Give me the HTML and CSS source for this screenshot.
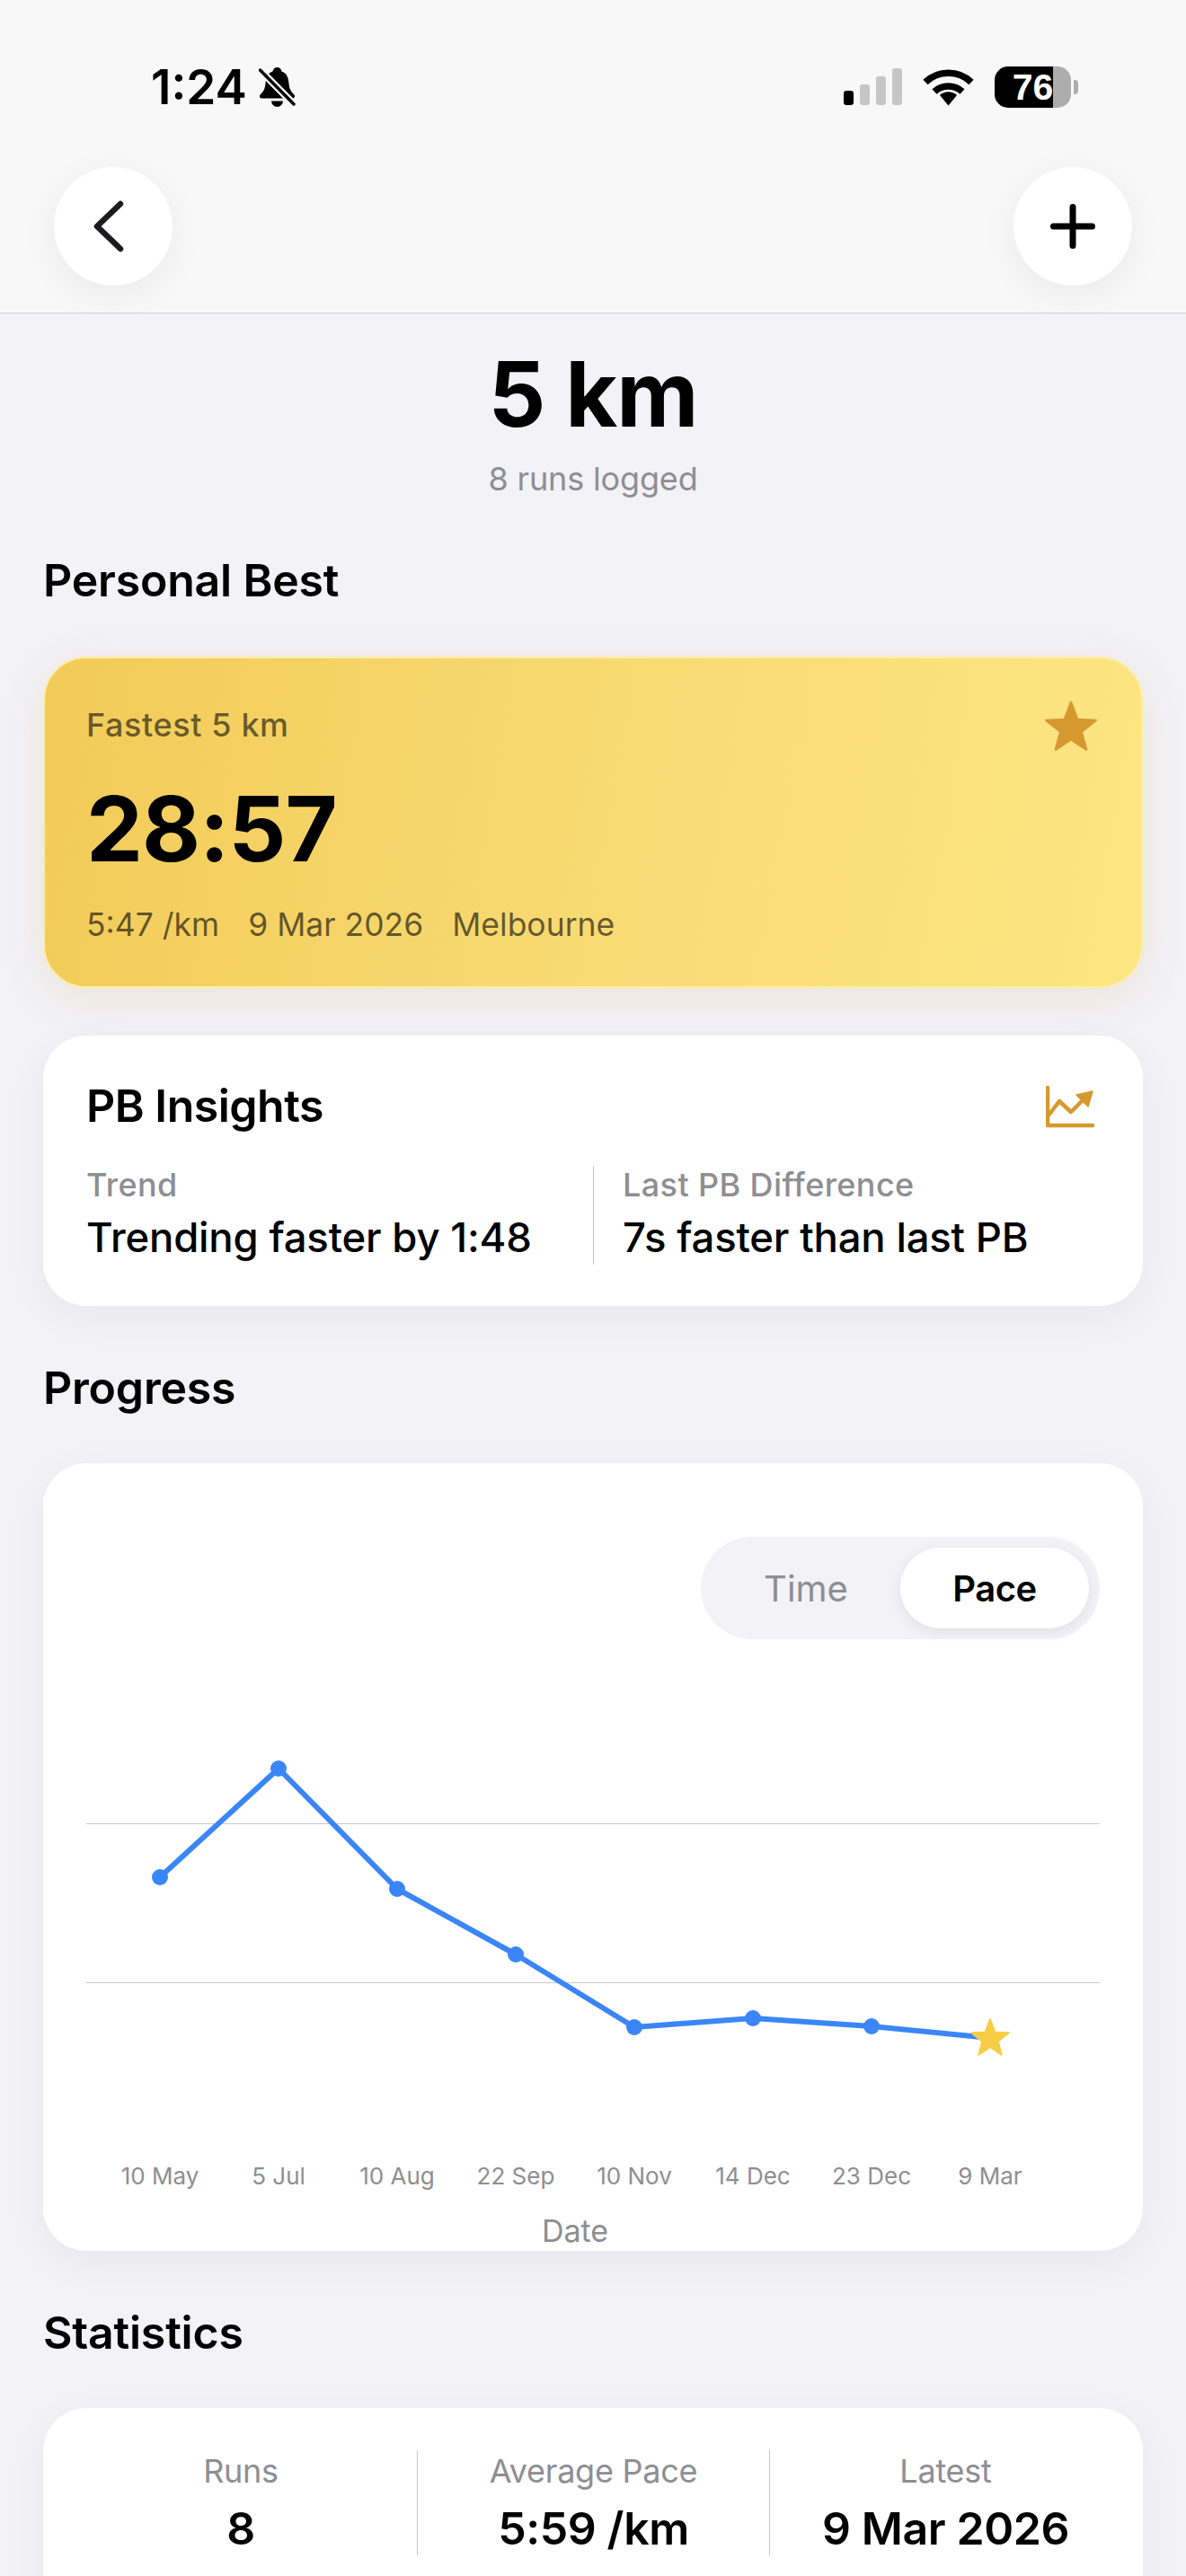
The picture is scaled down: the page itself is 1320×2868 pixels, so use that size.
FILE: index.html
```html
<!DOCTYPE html>
<html lang="en">
<head>
<meta charset="utf-8">
<title>5 km</title>
<link rel="stylesheet" href="styles.css">
</head>
<body>
<svg class="defs" width="0" height="0" aria-hidden="true">
  <symbol id="star" viewBox="-1.1 -1.1 2.2 2.2">
    <polygon points="0,-1 .247,-.34 .951,-.309 .4,.13 .588,.809 0,.42 -.588,.809 -.4,.13 -.951,-.309 -.247,-.34" fill="currentColor" stroke="currentColor" stroke-width=".09" stroke-linejoin="round"/>
  </symbol>
</svg>
<header class="topbar">
  <div class="status">
    <div class="status-left">
      <span class="clock">1:24</span>
      <svg class="bell" viewBox="0 0 41 46" width="41" height="46">
        <path d="M20.5 0c-2.6 0-4.6 2-5 4.6C9.500 6.600 8 12 7.500 18 7 24 5 27 2 30c-2 2-1 4.500 1.500 4.500h34c2.500 0 3.500-2.500 1.500-4.500-3-3-5-6-5.500-12C33 12 31.500 6.600 25.500 4.600 25.100 2 23.100 0 20.500 0z" fill="#000"/>
        <path d="M14 37.500h13a6.500 6.500 0 0 1-13 0z" fill="#000"/>
        <path d="M1 2.500 40 42" stroke="#f8f8f8" stroke-width="8"/>
        <path d="M1.500 3 39 41" stroke="#000" stroke-width="3.500" stroke-linecap="round"/>
      </svg>
    </div>
    <div class="status-right">
      <div class="signal">
        <i class="bar bar-1 bar-on"></i><i class="bar bar-2"></i><i class="bar bar-3"></i><i class="bar bar-4"></i>
      </div>
      <svg class="wifi" viewBox="0 0 57 43" width="57" height="43">
        <path d="M3 16.500a37 37 0 0 1 51 0" fill="none" stroke="#000" stroke-width="7.500"/>
        <path d="M13 27a23 23 0 0 1 31 0" fill="none" stroke="#000" stroke-width="7.500"/>
        <path d="M28.500 42.500 19 31a14 14 0 0 1 19 0z" fill="#000"/>
      </svg>
      <div class="battery"><span class="battery-level">76</span><i class="battery-nub"></i></div>
    </div>
  </div>
  <div class="nav">
    <button class="round-btn" aria-label="Back">
      <svg class="chevron" viewBox="0 0 40 60" width="40" height="60"><path d="M33 5 7 30l26 25" fill="none" stroke="#1c1c1e" stroke-width="6.500" stroke-linecap="round" stroke-linejoin="round"/></svg>
    </button>
    <button class="round-btn" aria-label="Add">
      <svg viewBox="0 0 56 56" width="56" height="56"><path d="M28 6.500v43M6.500 28h43" fill="none" stroke="#000" stroke-width="7" stroke-linecap="round"/></svg>
    </button>
  </div>
</header>

<main class="content">
  <div class="hero">
    <h1 class="hero-title">5 km</h1>
    <p class="hero-sub">8 runs logged</p>
  </div>

  <h2 class="section-title title-best">Personal Best</h2>
  <section class="pb-card">
    <div class="pb-head">
      <span class="pb-label">Fastest 5 km</span>
      <svg class="pb-star" width="64" height="64"><use href="#star"/></svg>
    </div>
    <div class="pb-time">28:57</div>
    <div class="pb-meta"><span>5:47 /km</span><span>9 Mar 2026</span><span>Melbourne</span></div>
  </section>

  <section class="card insights">
    <div class="insights-head">
      <h3 class="insights-title">PB Insights</h3>
      <svg class="trend-icon" viewBox="0 0 60 60" width="60" height="60">
        <path d="M2 10v42h50" fill="none" stroke="currentColor" stroke-width="4.500" stroke-linecap="round" stroke-linejoin="round"/>
        <path d="M2 42 15 25l13 12 14-14" fill="none" stroke="currentColor" stroke-width="4.500" stroke-linecap="round" stroke-linejoin="round"/>
        <path d="M34 18 52 14l-5 17z" fill="currentColor" stroke="currentColor" stroke-width="1.500" stroke-linejoin="round"/>
      </svg>
    </div>
    <div class="insights-grid">
      <div class="insight">
        <div class="insight-label">Trend</div>
        <div class="insight-value">Trending faster by 1:48</div>
      </div>
      <div class="insight insight-right">
        <div class="insight-label">Last PB Difference</div>
        <div class="insight-value">7s faster than last PB</div>
      </div>
    </div>
  </section>

  <h2 class="section-title title-progress">Progress</h2>
  <section class="card progress">
    <div class="toggle-row">
      <div class="toggle">
        <span class="seg">Time</span>
        <span class="seg seg-on">Pace</span>
      </div>
    </div>
    <svg class="chart" viewBox="96 1825 1128 575" width="1128" height="575">
      <line class="grid" x1="96" y1="2030.5" x2="1224" y2="2030.5"/>
      <line class="grid" x1="96" y1="2207.5" x2="1224" y2="2207.5"/>
      <polyline class="trend" points="178,2090 310,1969 442,2103 574,2176 706,2257 838,2247 970,2256 1102,2269"/>
      <g class="dots">
        <circle cx="178" cy="2090" r="9"/><circle cx="310" cy="1969" r="9"/><circle cx="442" cy="2103" r="9"/><circle cx="574" cy="2176" r="9"/>
        <circle cx="706" cy="2257" r="9"/><circle cx="838" cy="2247" r="9"/><circle cx="970" cy="2256" r="9"/>
      </g>
      <use class="chart-star" href="#star" x="1078" y="2246" width="48" height="48"/>
    </svg>
    <div class="axis">
      <span>10 May</span><span>5 Jul</span><span>10 Aug</span><span>22 Sep</span><span>10 Nov</span><span>14 Dec</span><span>23 Dec</span><span>9 Mar</span>
    </div>
    <div class="axis-title">Date</div>
  </section>

  <h2 class="section-title title-stats">Statistics</h2>
  <section class="card stats">
    <div class="stat"><div class="stat-label">Runs</div><div class="stat-value">8</div></div>
    <div class="stat"><div class="stat-label">Average Pace</div><div class="stat-value">5:59 /km</div></div>
    <div class="stat"><div class="stat-label">Latest</div><div class="stat-value">9 Mar 2026</div></div>
  </section>
</main>
</body>
</html>
```

FILE: styles.css
```css
* { box-sizing: border-box; }
html, body { margin: 0; padding: 0; height: 2868px; overflow: hidden; }
body {
  background: #f2f2f7;
  font-family: Inter, "Liberation Sans", sans-serif;
  color: #000;
}
.defs { position: absolute; }

/* top bar */
.topbar {
  height: 349px;
  background: #f8f8f8;
  border-bottom: 1px solid #cfcfcf;
  padding-top: 74px;
}
.status {
  display: flex;
  justify-content: space-between;
  height: 46px;
  padding: 0 128px 0 168px;
}
.status-left { display: flex; align-items: center; gap: 13px; }
.clock { font-size: 53px; font-weight: 600; line-height: 46px; }
.bell { display: block; margin-top: 2px; }
.status-right { display: flex; align-items: flex-start; }
.signal { display: flex; align-items: flex-end; gap: 7px; height: 43px; margin-right: 23px; width: 65px; }
.bar { display: block; width: 11px; border-radius: 3px; background: #c6c6c6; }
.bar-1 { height: 16px; }
.bar-2 { height: 23px; }
.bar-3 { height: 32px; }
.bar-4 { height: 41px; }
.bar-on { background: #000; }
.wifi { display: block; margin-top: 1px; margin-right: 23px; }
.battery {
  position: relative;
  width: 85px;
  height: 46px;
  border-radius: 15px;
  background: linear-gradient(90deg, #000 0 65px, #adadad 65px);
  text-align: center;
  color: #fff;
}
.battery-level {
  font-family: "Liberation Sans", sans-serif;
  font-size: 41px;
  font-weight: 700;
  line-height: 46px;
  display: block;
}
.battery-nub {
  position: absolute;
  left: 88px;
  top: 15px;
  width: 5px;
  height: 16px;
  border-radius: 0 4px 4px 0;
  background: #adadad;
}
.nav {
  display: flex;
  justify-content: space-between;
  padding: 66px 60px 0;
}
.round-btn {
  width: 132px;
  height: 132px;
  border: 0;
  padding: 0;
  border-radius: 50%;
  background: #fff;
  display: flex;
  align-items: center;
  justify-content: center;
  box-shadow: 0 10px 40px rgba(0, 0, 0, .06);
}
.chevron { margin-right: 10px; }

/* main */
.content { padding: 0 48px; }
.hero { text-align: center; padding-top: 30px; }
.hero-title { margin: 0; font-size: 100px; font-weight: 700; line-height: 120px; letter-spacing: -1px; }
.hero-sub { margin: 9px 0 0; font-size: 36px; line-height: 50px; letter-spacing: -.15px; color: #8e8e93; }
.section-title { margin: 0; font-size: 50px; font-weight: 600; line-height: 60px; letter-spacing: -.2px; }
.title-best { margin-top: 58px; margin-bottom: 55px; }
.title-progress { margin-top: 61px; margin-bottom: 54px; }
.title-stats { margin-top: 61px; margin-bottom: 54px; }

.pb-card {
  border: 2px solid #fdeea6;
  border-radius: 48px;
  padding: 46px 46px 43px;
  height: 369px;
  background: linear-gradient(100deg, #f2cb58 0%, #f8da72 50%, #fce683 100%);
  box-shadow: 0 12px 48px rgba(214, 153, 47, .16);
}
.pb-head { display: flex; justify-content: space-between; align-items: flex-start; height: 64px; }
.pb-label { font-size: 36px; font-weight: 500; line-height: 56px; letter-spacing: .6px; color: rgba(0, 0, 0, .58); }
.pb-star { color: #d6992f; display: block; }
.pb-time { margin-top: 20px; font-size: 100px; font-weight: 700; line-height: 120px; letter-spacing: -1px; }
.pb-meta {
  display: flex;
  gap: 32px;
  margin-top: 22px;
  font-size: 35.5px;
  line-height: 50px;
  color: rgba(0, 0, 0, .6);
}

.card {
  background: #fff;
  border-radius: 48px;
  box-shadow: 0 12px 48px rgba(0, 0, 0, .05);
}
.insights { margin-top: 53px; padding: 48px 48px 44px; height: 301px; }
.insights-head { display: flex; justify-content: space-between; height: 60px; }
.insights-title { margin: 0; font-size: 50px; font-weight: 600; line-height: 60px; letter-spacing: -.5px; }
.trend-icon { color: #d6992f; display: block; }
.insights-grid { display: grid; grid-template-columns: 564px 1fr; margin-top: 37px; height: 109px; }
.insight-right { border-left: 1px solid #c8c8c8; padding-left: 32px; }
.insight-label { font-size: 36px; font-weight: 500; line-height: 42px; letter-spacing: .4px; color: #8e8e93; }
.insight-value { margin-top: 8px; font-size: 45.5px; font-weight: 500; line-height: 60px; letter-spacing: -.2px; }

.progress { height: 877px; padding: 82px 48px 0; }
.toggle-row { display: flex; justify-content: flex-end; }
.toggle {
  display: grid;
  grid-template-columns: 210px 210px;
  width: 444px;
  height: 114px;
  padding: 12px;
  border-radius: 57px;
  background: #f2f2f7;
}
.seg {
  display: flex;
  align-items: center;
  justify-content: center;
  font-size: 40px;
  color: #8e8e93;
  border-radius: 45px;
}
.seg-on {
  background: #fff;
  color: #000;
  font-weight: 600;
  letter-spacing: -.5px;
  box-shadow: 0 4px 16px rgba(0, 0, 0, .08);
}
.chart { display: block; }
.grid { stroke: #c8c8c8; stroke-width: 1; }
.trend { fill: none; stroke: #3b86f7; stroke-width: 6; stroke-linejoin: round; }
.dots { fill: #3b86f7; }
.chart-star { color: #f6cd45; }
.axis {
  display: grid;
  grid-template-columns: repeat(8, 132px);
  padding-left: 16px;
  font-size: 26px;
  line-height: 46px;
  color: #8e8e93;
  text-align: center;
}
.axis-title { padding-right: 40px; margin-top: 15px; text-align: center; font-size: 34px; line-height: 46px; color: #8e8e93; }

.stats {
  display: grid;
  grid-template-columns: repeat(3, 1fr);
  height: 260px;
  padding: 47px 24px 0;
}
.stat { height: 117px; text-align: center; border-left: 1px solid #c8c8c8; }
.stat:first-child { border-left: 0; }
.stat-label { font-size: 36px; line-height: 46px; letter-spacing: -.25px; color: #8e8e93; }
.stat-value { margin-top: 11px; font-size: 50px; font-weight: 600; line-height: 60px; letter-spacing: -.4px; }
```
